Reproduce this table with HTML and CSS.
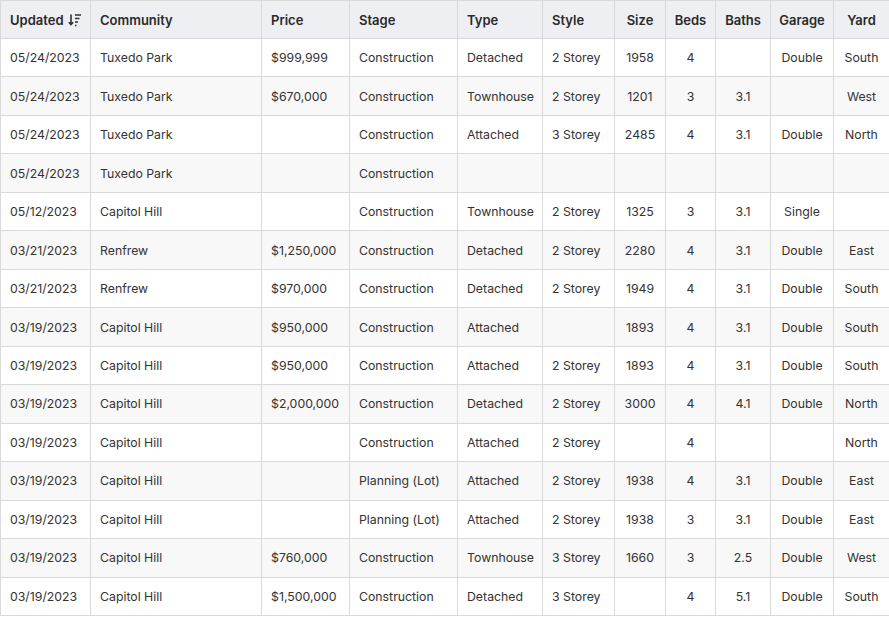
FILE: index.html
```html
<!DOCTYPE html>
<html>
<head>
<meta charset="utf-8">
<link rel="stylesheet" href="styles.css">
</head>
<body>
<table class="grid">
<colgroup>
<col class="c-upd"><col class="c-com"><col class="c-price"><col class="c-stage"><col class="c-type"><col class="c-style"><col class="c-size"><col class="c-beds"><col class="c-baths"><col class="c-gar"><col class="c-yard">
</colgroup>
<thead>
<tr>
<th>Updated <svg class="sort" width="14" height="14" viewBox="0 0 14 14"><path d="M3 1.5v10M0.8 9.2L3 11.6L5.2 9.2" fill="none" stroke="#333" stroke-width="1.6"/><path d="M7 2h6M7 5.5h4.5M7 9h3M7 12.5h1.5" stroke="#333" stroke-width="1.5"/></svg></th>
<th>Community</th><th>Price</th><th>Stage</th><th>Type</th><th>Style</th>
<th class="ctr">Size</th><th class="ctr">Beds</th><th class="ctr">Baths</th><th class="ctr">Garage</th><th class="ctr">Yard</th>
</tr>
</thead>
<tbody>
<tr><td>05/24/2023</td><td>Tuxedo Park</td><td>$999,999</td><td>Construction</td><td>Detached</td><td>2 Storey</td><td class="ctr">1958</td><td class="ctr">4</td><td class="ctr"></td><td class="ctr">Double</td><td class="ctr">South</td></tr>
<tr><td>05/24/2023</td><td>Tuxedo Park</td><td>$670,000</td><td>Construction</td><td>Townhouse</td><td>2 Storey</td><td class="ctr">1201</td><td class="ctr">3</td><td class="ctr">3.1</td><td class="ctr"></td><td class="ctr">West</td></tr>
<tr><td>05/24/2023</td><td>Tuxedo Park</td><td></td><td>Construction</td><td>Attached</td><td>3 Storey</td><td class="ctr">2485</td><td class="ctr">4</td><td class="ctr">3.1</td><td class="ctr">Double</td><td class="ctr">North</td></tr>
<tr><td>05/24/2023</td><td>Tuxedo Park</td><td></td><td>Construction</td><td></td><td></td><td class="ctr"></td><td class="ctr"></td><td class="ctr"></td><td class="ctr"></td><td class="ctr"></td></tr>
<tr><td>05/12/2023</td><td>Capitol Hill</td><td></td><td>Construction</td><td>Townhouse</td><td>2 Storey</td><td class="ctr">1325</td><td class="ctr">3</td><td class="ctr">3.1</td><td class="ctr">Single</td><td class="ctr"></td></tr>
<tr><td>03/21/2023</td><td>Renfrew</td><td>$1,250,000</td><td>Construction</td><td>Detached</td><td>2 Storey</td><td class="ctr">2280</td><td class="ctr">4</td><td class="ctr">3.1</td><td class="ctr">Double</td><td class="ctr">East</td></tr>
<tr><td>03/21/2023</td><td>Renfrew</td><td>$970,000</td><td>Construction</td><td>Detached</td><td>2 Storey</td><td class="ctr">1949</td><td class="ctr">4</td><td class="ctr">3.1</td><td class="ctr">Double</td><td class="ctr">South</td></tr>
<tr><td>03/19/2023</td><td>Capitol Hill</td><td>$950,000</td><td>Construction</td><td>Attached</td><td></td><td class="ctr">1893</td><td class="ctr">4</td><td class="ctr">3.1</td><td class="ctr">Double</td><td class="ctr">South</td></tr>
<tr><td>03/19/2023</td><td>Capitol Hill</td><td>$950,000</td><td>Construction</td><td>Attached</td><td>2 Storey</td><td class="ctr">1893</td><td class="ctr">4</td><td class="ctr">3.1</td><td class="ctr">Double</td><td class="ctr">South</td></tr>
<tr><td>03/19/2023</td><td>Capitol Hill</td><td>$2,000,000</td><td>Construction</td><td>Detached</td><td>2 Storey</td><td class="ctr">3000</td><td class="ctr">4</td><td class="ctr">4.1</td><td class="ctr">Double</td><td class="ctr">North</td></tr>
<tr><td>03/19/2023</td><td>Capitol Hill</td><td></td><td>Construction</td><td>Attached</td><td>2 Storey</td><td class="ctr"></td><td class="ctr">4</td><td class="ctr"></td><td class="ctr"></td><td class="ctr">North</td></tr>
<tr><td>03/19/2023</td><td>Capitol Hill</td><td></td><td>Planning (Lot)</td><td>Attached</td><td>2 Storey</td><td class="ctr">1938</td><td class="ctr">4</td><td class="ctr">3.1</td><td class="ctr">Double</td><td class="ctr">East</td></tr>
<tr><td>03/19/2023</td><td>Capitol Hill</td><td></td><td>Planning (Lot)</td><td>Attached</td><td>2 Storey</td><td class="ctr">1938</td><td class="ctr">3</td><td class="ctr">3.1</td><td class="ctr">Double</td><td class="ctr">East</td></tr>
<tr><td>03/19/2023</td><td>Capitol Hill</td><td>$760,000</td><td>Construction</td><td>Townhouse</td><td>3 Storey</td><td class="ctr">1660</td><td class="ctr">3</td><td class="ctr">2.5</td><td class="ctr">Double</td><td class="ctr">West</td></tr>
<tr><td>03/19/2023</td><td>Capitol Hill</td><td>$1,500,000</td><td>Construction</td><td>Detached</td><td>3 Storey</td><td class="ctr"></td><td class="ctr">4</td><td class="ctr">5.1</td><td class="ctr">Double</td><td class="ctr">South</td></tr>
</tbody>
</table>
</body>
</html>
```
FILE: styles.css
```css
html, body {
  margin: 0;
  padding: 0;
  background: #fff;
  overflow: hidden;
}
.grid {
  border-collapse: collapse;
  table-layout: fixed;
  width: 889px;
  font-family: Inter, "Noto Sans", sans-serif;
  font-size: 12.3px;
  color: #333;
}
.c-upd { width: 90px; }
.c-com { width: 171px; }
.c-price { width: 88px; }
.c-stage { width: 108px; }
.c-type { width: 85px; }
.c-style { width: 72px; }
.c-size { width: 51px; }
.c-beds { width: 50px; }
.c-baths { width: 55px; }
.c-gar { width: 63px; }
.c-yard { width: 56px; }
.grid th, .grid td {
  border: 1px solid #d9d9d9;
  padding: 0 9px;
  height: 37.47px;
  text-align: left;
  white-space: nowrap;
  overflow: hidden;
}
.grid th {
  background: #eeeff3;
  font-weight: 600;
  font-size: 13px;
  color: #2a2a2a;
  height: 37px;
}
.grid tbody tr:nth-child(even) td {
  background: #f8f8f8;
}
.grid .ctr {
  text-align: center;
  padding: 0 4px;
}
.sort {
  vertical-align: -2px;
  margin-left: 1px;
}
```
